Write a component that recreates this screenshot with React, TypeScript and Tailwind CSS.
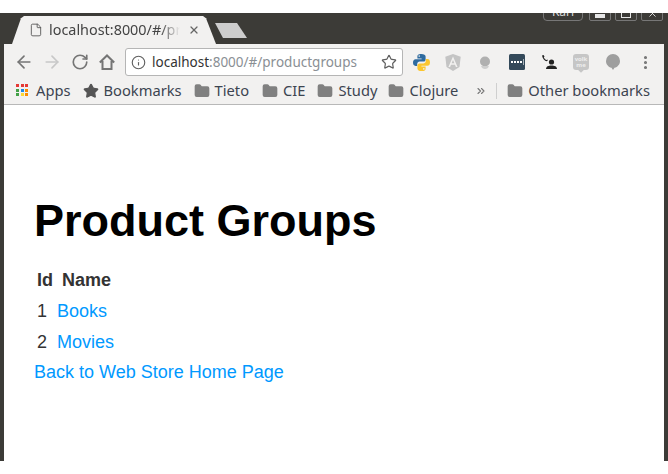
import { ArrowLeft, ArrowRight, RotateCw, Star, Info, X, File, Folder, MoreVertical, ChevronsRight } from "lucide-react";

function AppsGrid() {
  const colors = ["#e53935", "#e53935", "#e53935", "#43a047", "#1e88e5", "#fb8c00", "#43a047", "#fdd835", "#fb8c00"];
  return (
    <div className="grid grid-cols-3 gap-px w-[13px] h-[13px] shrink-0">
      {colors.map((c, i) => (
        <div key={i} className="w-[3px] h-[3px]" style={{ backgroundColor: c }} />
      ))}
    </div>
  );
}

function HomeIcon() {
  return (
    <svg width="16" height="16" viewBox="0 0 16 16" fill="none" stroke="#757575" strokeWidth="2">
      <path d="M.8 8.500 8 1.500l7.200 7M3.500 7v8h9V7" />
    </svg>
  );
}

function PythonIcon() {
  return (
    <svg width="17" height="17" viewBox="0 0 17 17">
      <path fill="#2f6b9f" d="M8.300 0C5 0 4.400 1.200 4.400 2.600v1.900h4.200v.8H2.600C1 5.300 0 6.600 0 8.600c0 2.100 1 3.300 2.500 3.300h1.700V9.900c0-1.400 1.200-2.400 2.500-2.400h3.900c1.200 0 2-1 2-2.100V2.600C12.600 1 11 0 8.300 0zM6.200 1.300a.8.8 0 1 1 0 1.600.8.8 0 0 1 0-1.600z" />
      <path fill="#fbc62e" d="M8.700 17c3.300 0 3.900-1.200 3.900-2.600v-1.900H8.400v-.8h6c1.600 0 2.600-1.300 2.600-3.300 0-2.100-1-3.300-2.500-3.300h-1.700v2c0 1.400-1.200 2.400-2.500 2.400H6.400c-1.200 0-2 1-2 2.100v2.800C4.400 16 6 17 8.700 17zm2.100-1.300a.8.8 0 1 1 0-1.600.8.8 0 0 1 0 1.600z" />
    </svg>
  );
}

function AngularIcon() {
  return (
    <svg width="16" height="17" viewBox="0 0 16 17">
      <path fill="#c4c4c4" d="M8 0 .3 2.700l1.200 10.200L8 17l6.500-4.100 1.200-10.200z" />
      <path fill="#f2f1f0" d="M8 2.500 3.400 13h1.700l.9-2.300h4l.9 2.300h1.700zm0 3.600 1.400 3.200H6.600z" />
    </svg>
  );
}

function BulbIcon() {
  return (
    <svg width="12" height="13" viewBox="0 0 12 13">
      <circle cx="6" cy="5.500" r="5" fill="#b0b0b0" />
      <path fill="#cfcfcf" d="M2 10h8c-.6 1.800-2 3-4 3s-3.400-1.200-4-3z" />
    </svg>
  );
}

function DotsBoxIcon() {
  return (
    <svg width="16" height="16" viewBox="0 0 16 16">
      <rect width="16" height="16" rx="1.500" fill="#34495a" />
      <rect x="2" y="7" width="2" height="2" fill="#fff" />
      <rect x="5" y="7" width="2" height="2" fill="#fff" />
      <rect x="8" y="7" width="2" height="2" fill="#fff" />
      <rect x="11" y="7" width="2" height="2" fill="#fff" />
      <rect x="14" y="5" width="1" height="6" fill="#aab4bb" />
    </svg>
  );
}

function PersonIcon() {
  return (
    <svg width="15" height="15" viewBox="0 0 15 15" fill="#222">
      <path d="M0 .5 1.500 0l1 1.500-.7 1c.6 1.200 1.600 2.100 2.800 2.600l.8-.5.5.6-1.200 1C2.700 6 .6 3.500 0 .5z" />
      <circle cx="9.500" cy="7" r="2.600" />
      <path d="M4 14c0-2.500 2.400-3.600 5.500-3.600S15 11.500 15 14z" />
    </svg>
  );
}

function WalkMeIcon() {
  return (
    <div className="relative flex h-[16px] w-[16px] flex-col items-center justify-center rounded-[3px] bg-[#c6c6c6] text-[6px] font-bold leading-[6px] text-[#eeeeee]">
      <span>volk</span>
      <span>me</span>
      <div className="absolute -bottom-[2px] left-[6px] h-[4px] w-[4px] rotate-45 bg-[#c6c6c6]" />
    </div>
  );
}

function BubbleIcon() {
  return (
    <svg width="14" height="16" viewBox="0 0 14 16">
      <path fill="#9e9e9e" d="M7 0a7 7 0 0 1 7 7c0 3.400-2.400 6-5.500 6.800L7 16l-1.500-2.200C2.400 13 0 10.400 0 7a7 7 0 0 1 7-7z" />
    </svg>
  );
}

function Bookmark({ label, className }: { label: string; className: string }) {
  return (
    <div className={`flex items-center gap-[5px] ${className}`}>
      <Folder size={16} fill="#808080" stroke="#808080" className="shrink-0" />
      <span>{label}</span>
    </div>
  );
}

function WindowButton({ children }: { children: React.ReactNode }) {
  return (
    <div className="flex h-[18px] w-[22px] items-end justify-center rounded-[2px] border border-[#777777] pb-[1px]">
      {children}
    </div>
  );
}

function BrowserChrome() {
  return (
    <div className="bg-[#f2f1f0]">
      <div className="flex h-[31px] overflow-hidden bg-[#3c3b37]">
        <div className="ml-[8px] mt-[3px] flex h-[28px] w-[204px] shrink-0 items-center bg-[#f2f1f0] pl-[17px] [clip-path:polygon(0_100%,9px_8%,12px_0,191px_0,194px_8%,204px_100%)]">
          <File size={14} strokeWidth={1.5} className="shrink-0 text-[#555555]" />
          <span className="ml-[6px] w-[131px] overflow-hidden whitespace-nowrap text-[14.4px] text-[#444444] [mask-image:linear-gradient(to_right,black_85%,transparent)]">
            localhost:8000/#/productgroups
          </span>
          <X size={12} strokeWidth={2.5} className="ml-[8px] shrink-0 text-[#666666]" />
        </div>
        <div className="ml-[-1px] mt-[10px] h-[15px] w-[32px] bg-[#cdcdcd] [clip-path:polygon(0_0,22px_0,100%_100%,8px_100%)]" />
        <div className="ml-auto mr-[1px] flex h-[8px] items-end gap-[4px] overflow-hidden">
          <div className="mr-[2px] flex h-[18px] w-[40px] items-center justify-center rounded-[4px] border border-[#777777] text-[12px] leading-none text-[#dddddd]">
            Kari
          </div>
          <WindowButton><div className="mb-[1px] h-[4px] w-[10px] bg-[#e6e6e6]" /></WindowButton>
          <WindowButton><div className="mb-[1px] h-[8px] w-[10px] border border-[#e6e6e6]" /></WindowButton>
          <WindowButton><X size={11} strokeWidth={2} className="text-[#e6e6e6]" /></WindowButton>
        </div>
      </div>

      <div className="flex h-[36px] items-center pl-[10px] pr-[10px]">
        <ArrowLeft size={20} strokeWidth={2} className="shrink-0 text-[#757575]" />
        <ArrowRight size={20} strokeWidth={2} className="ml-[8px] shrink-0 text-[#c8c8c8]" />
        <RotateCw size={18} strokeWidth={2.2} className="ml-[9px] shrink-0 text-[#757575]" />
        <div className="ml-[10px] shrink-0">
          <HomeIcon />
        </div>
        <div className="ml-[10px] flex h-[28px] w-[278px] shrink-0 items-center rounded-[3px] border border-[#b5b5b5] bg-white pl-[5px] pr-[5px]">
          <Info size={15} strokeWidth={1.8} className="shrink-0 text-[#5f5f5f]" />
          <span className="ml-[6px] whitespace-nowrap text-[13.5px] text-[#333333]">
            localhost<span className="text-[#8a8f94]">:8000/#/productgroups</span>
          </span>
          <Star size={16} strokeWidth={1.8} className="ml-auto shrink-0 text-[#5f5f5f]" />
        </div>
        <div className="ml-[10px] shrink-0"><PythonIcon /></div>
        <div className="ml-[15px] shrink-0"><AngularIcon /></div>
        <div className="ml-[18px] shrink-0"><BulbIcon /></div>
        <div className="ml-[18px] shrink-0"><DotsBoxIcon /></div>
        <div className="ml-[17px] shrink-0"><PersonIcon /></div>
        <div className="ml-[16px] shrink-0"><WalkMeIcon /></div>
        <div className="ml-[17px] shrink-0"><BubbleIcon /></div>
        <MoreVertical size={17} strokeWidth={2.4} className="ml-[17px] shrink-0 text-[#757575]" />
      </div>

      <div className="flex h-[25px] items-center border-b border-[#b8b8b8] pb-[3px] pl-[12px] text-[14.7px] text-[#3c4450]">
        <div className="flex items-center gap-[7px]">
          <AppsGrid />
          <span>Apps</span>
        </div>
        <div className="ml-[12px] flex items-center gap-[5px]">
          <Star size={16} fill="#555555" stroke="#555555" className="shrink-0" />
          <span>Bookmarks</span>
        </div>
        <Bookmark label="Tieto" className="ml-[12px]" />
        <Bookmark label="CIE" className="ml-[13px]" />
        <Bookmark label="Study" className="ml-[12px]" />
        <Bookmark label="Clojure" className="ml-[11px]" />
        <ChevronsRight size={12} strokeWidth={2.2} className="ml-[17px] shrink-0 text-[#777777]" />
        <div className="ml-[9px] h-[16px] w-px bg-[#cfcfcf]" />
        <Bookmark label="Other bookmarks" className="ml-[10px]" />
      </div>
    </div>
  );
}

function App() {
  const groups = [
    { id: 1, name: "Books" },
    { id: 2, name: "Movies" },
  ];

  return (
    <div className="h-[474px] w-[668px] overflow-hidden bg-white pt-[13px] [font-family:'Noto_Sans',sans-serif]">
      <div className="h-[448px] bg-[#3c3b37] px-[4px]">
        <BrowserChrome />
        <div className="h-[356px] bg-white pl-[30px] pt-[89px] text-[18px] leading-[24px] text-[#333333] [font-family:'Liberation_Sans',sans-serif]">
          <h1 className="text-[45px] font-bold leading-[53px] text-black">Product Groups</h1>
          <table className="mb-[3px] mt-[17px] border-separate border-spacing-0">
            <thead>
              <tr className="h-[31px]">
                <th className="pl-[3px] pr-[4px] text-left font-bold">Id</th>
                <th className="pl-[5px] pr-[3px] text-left font-bold">Name</th>
              </tr>
            </thead>
            <tbody>
              {groups.map((g) => (
                <tr key={g.id} className="h-[31px]">
                  <td className="pl-[3px]">{g.id}</td>
                  <td>
                    <a href="#" className="text-[#0099ff]">{g.name}</a>
                  </td>
                </tr>
              ))}
            </tbody>
          </table>
          <a href="#" className="block text-[#0099ff]">Back to Web Store Home Page</a>
        </div>
      </div>
    </div>
  );
}

export default App;
